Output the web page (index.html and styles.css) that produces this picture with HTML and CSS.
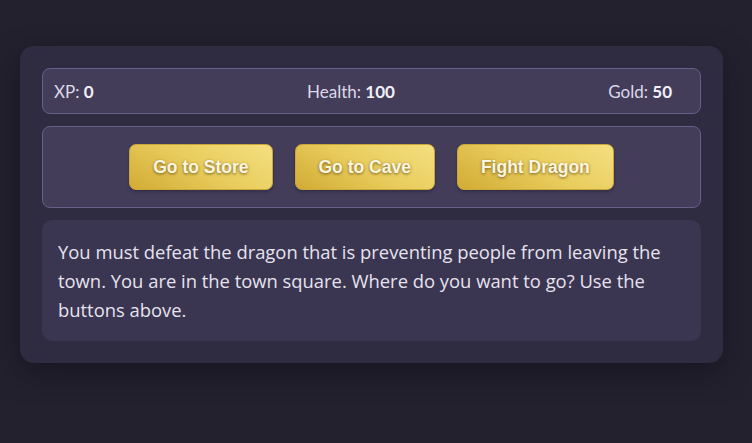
FILE: index.html
```html
<!DOCTYPE html>
<html>
<head>
<meta charset="utf-8">
<link rel="stylesheet" href="styles.css">
</head>
<body>
<div class="game">
  <div class="stats">
    <span class="stat">XP: <strong>0</strong></span>
    <span class="stat">Health: <strong>100</strong></span>
    <span class="stat">Gold: <strong>50</strong></span>
  </div>
  <div class="controls">
    <button class="btn">Go to Store</button>
    <button class="btn">Go to Cave</button>
    <button class="btn">Fight Dragon</button>
  </div>
  <div class="text">You must defeat the dragon that is preventing people from leaving the town. You are in the town square. Where do you want to go? Use the buttons above.</div>
</div>
</body>
</html>
```
FILE: styles.css
```css
html, body {
  margin: 0;
  background: #24212f;
}
body {
  padding: 46px 20px;
  font-family: "Open Sans", "Noto Sans", sans-serif;
}
.game {
  width: 703px;
  box-sizing: border-box;
  background: #2f2b41;
  border-radius: 14px;
  padding: 22px;
  display: flex;
  flex-direction: column;
  gap: 12px;
  box-shadow: 0 10px 30px rgba(10, 8, 20, 0.45);
}
.stats {
  height: 46px;
  box-sizing: border-box;
  background: #433d5a;
  border: 1px solid #675f8b;
  border-radius: 8px;
  display: flex;
  justify-content: space-between;
  align-items: center;
  padding: 0 28px 0 11px;
  font-family: Lato, sans-serif;
  font-size: 17px;
  color: #dcd8ea;
}
.stat strong {
  color: #f1eff8;
  font-weight: 700;
}
.controls {
  height: 82px;
  box-sizing: border-box;
  background: #433d5a;
  border: 1px solid #675f8b;
  border-radius: 8px;
  display: flex;
  justify-content: center;
  align-items: center;
  gap: 22px;
}
.btn {
  height: 46px;
  padding: 0 23px;
  border: 1px solid #c9a739;
  border-radius: 7px;
  background: linear-gradient(30deg, #d2ab35 0%, #e8cc5c 50%, #f4df80 100%);
  font-family: "Liberation Sans", Arial, sans-serif;
  font-weight: 700;
  font-size: 17.5px;
  color: #fbf5df;
  text-shadow: 0 1px 3px rgba(70, 50, 10, 0.7);
  box-shadow: 0 2px 3px rgba(20, 15, 30, 0.3);
}
.text {
  background: #3a3550;
  border-radius: 10px;
  padding: 17px 16px;
  font-size: 18.4px;
  line-height: 29px;
  color: #e6e3ef;
}
```
